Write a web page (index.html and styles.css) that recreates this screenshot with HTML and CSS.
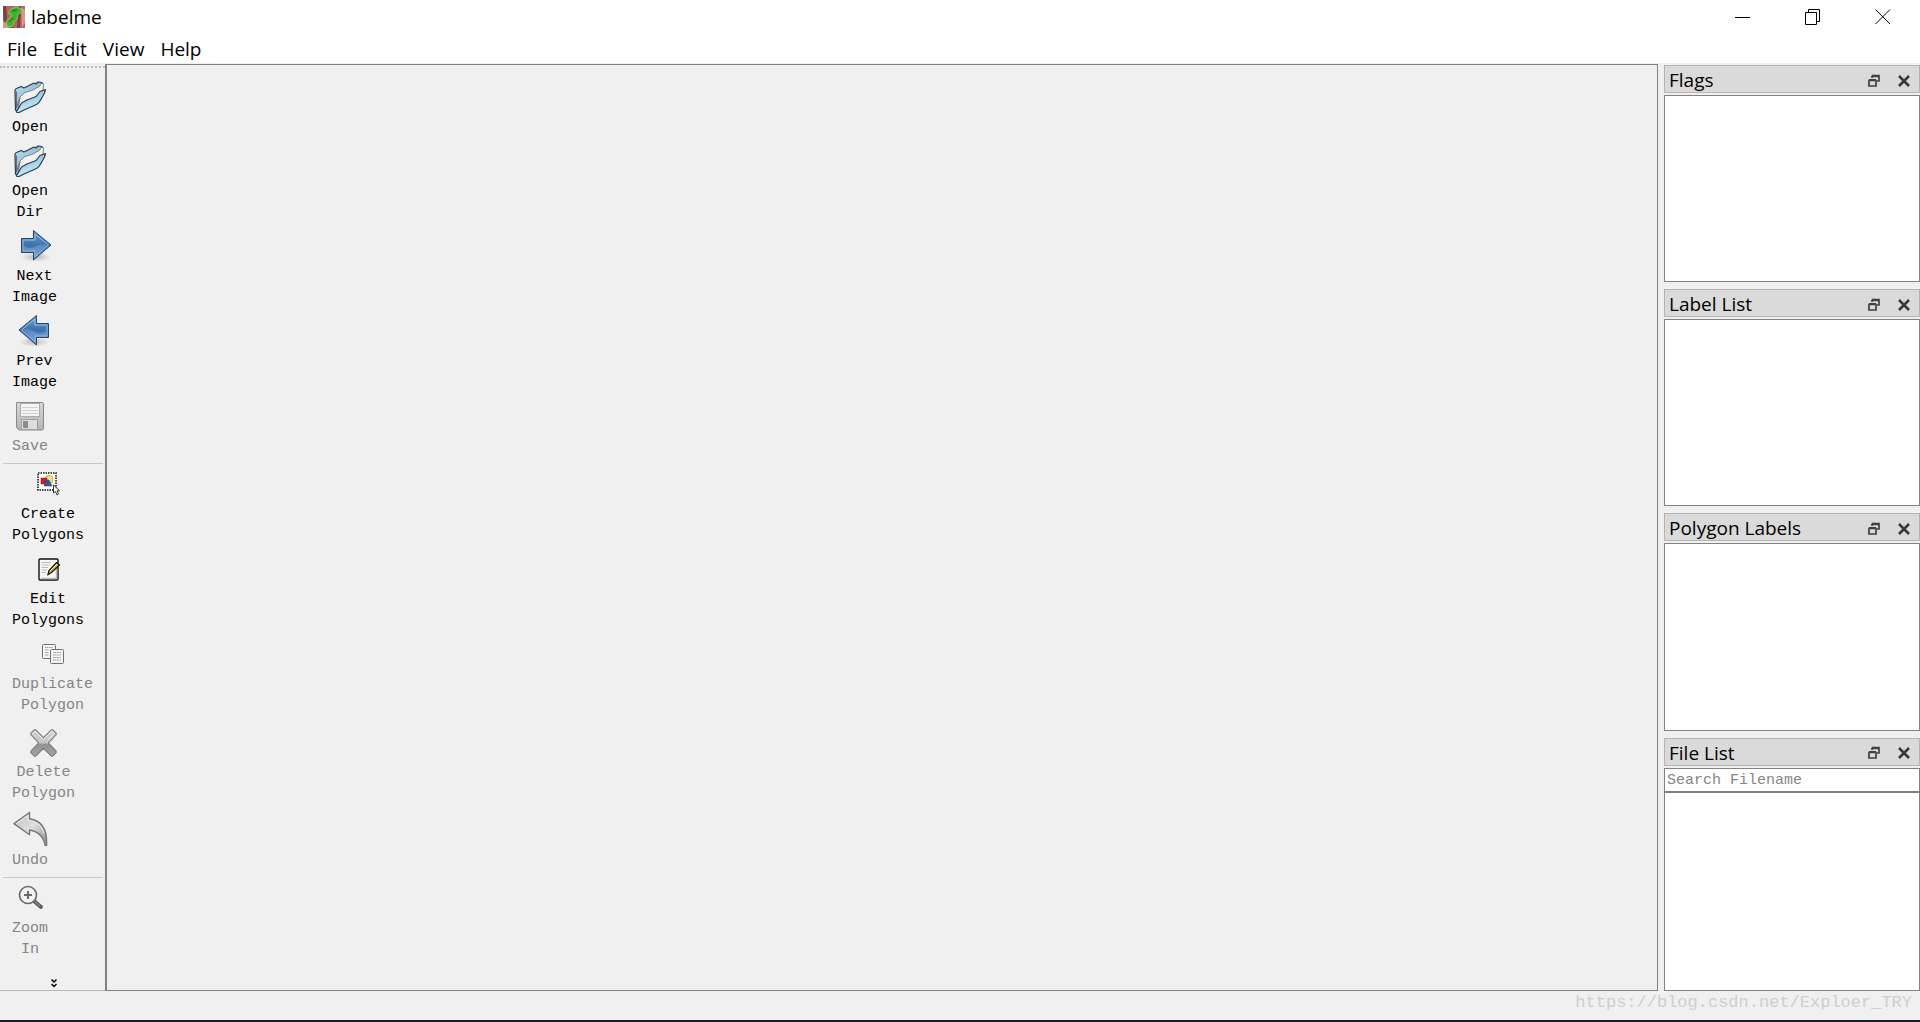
FILE: index.html
```
<!DOCTYPE html>
<html lang="en">
  <head>
    <meta charset="UTF-8" />
    <meta name="viewport" content="width=device-width, initial-scale=1.0" />
    <title>labelme</title>
    <link rel="stylesheet" href="styles.css">
  </head>
  <body>
    <svg class="defs" width="0" height="0" aria-hidden="true">
      <defs>
        <linearGradient id="folder-back" x1="0" y1="0" x2="1" y2="1">
          <stop offset="0" stop-color="#c3dff0" />
          <stop offset="1" stop-color="#6a9fbe" />
        </linearGradient>
        <linearGradient id="folder-front" x1="0" y1="0" x2="0.4" y2="1">
          <stop offset="0" stop-color="#7fb0cc" />
          <stop offset="0.6" stop-color="#a9d6ec" />
          <stop offset="1" stop-color="#d8f0fa" />
        </linearGradient>
        <linearGradient id="arrow-blue" x1="0" y1="0" x2="0" y2="1">
          <stop offset="0" stop-color="#6f9fd2" />
          <stop offset="0.5" stop-color="#3b71ad" />
          <stop offset="1" stop-color="#6f9dcf" />
        </linearGradient>
        <radialGradient id="shadow">
          <stop offset="0" stop-color="#777" stop-opacity="0.45" />
          <stop offset="1" stop-color="#777" stop-opacity="0" />
        </radialGradient>
        <linearGradient id="metal" x1="0" y1="0" x2="0" y2="1">
          <stop offset="0" stop-color="#d8d8d8" />
          <stop offset="1" stop-color="#b4b4b4" />
        </linearGradient>
        <linearGradient id="cross" x1="0" y1="0" x2="0" y2="1">
          <stop offset="0" stop-color="#d4d4d4" />
          <stop offset="0.5" stop-color="#c4c4c4" />
          <stop offset="0.55" stop-color="#929292" />
          <stop offset="1" stop-color="#a4a4a4" />
        </linearGradient>
        <linearGradient id="undo-fill" x1="0" y1="0" x2="1" y2="1">
          <stop offset="0" stop-color="#c0c0c0" />
          <stop offset="0.5" stop-color="#dedede" />
          <stop offset="1" stop-color="#8c8c8c" />
        </linearGradient>
        <symbol id="folder" viewBox="0 0 32 32">
          <path d="M1 9.500Q1 8 2.500 7.500L7 5.500L10 7L20 2L22 3L24 1L28 1.500L28.500 9L10 27L3 31L1.500 29Z" fill="url(#folder-back)" stroke="#2b3c48" stroke-width="1.200" stroke-linejoin="round" />
          <path d="M6 16L10 12L19 9L26 5L27 2.500L29.500 2.500L29 11L9 26L4 29Z" fill="#f4f1ef" stroke="#6d6d6d" stroke-width="0.800" />
          <path d="M3.500 29L7.500 22L13 19L22 15.500L26 10.500L31.500 8.500L30.500 12L26 20Q25 22 22.500 23.500L10 29L4 32Q2 31 2.500 29.500Z" fill="url(#folder-front)" stroke="#2b3c48" stroke-width="1.200" stroke-linejoin="round" />
          <path d="M2.500 10.500V27L6 17" fill="none" stroke="#5b7383" stroke-width="1.200" />
        </symbol>
        <symbol id="float" viewBox="0 0 12 13">
          <path d="M4 1.500H11V7H9M4 1.500V4M4 2.500H11" fill="none" stroke="#404040" stroke-width="1.700" />
          <path d="M1 6.500H8V12H1ZM1 5.800H8" fill="none" stroke="#404040" stroke-width="1.700" />
        </symbol>
        <symbol id="dock-close" viewBox="0 0 12 13">
          <path d="M1 2L11 12M11 2L1 12" fill="none" stroke="#383838" stroke-width="2.500" />
        </symbol>
      </defs>
    </svg>

    <div class="app">
      <header class="titlebar">
        <svg class="logo" viewBox="0 0 22 22" aria-hidden="true">
          <rect width="22" height="22" fill="#b86662" />
          <path d="M0 0H3L5 22H1ZM15 2L18 0L17 22H14ZM8 14L11 22H7Z" fill="#7d4142" />
          <path d="M18 1L22 4V16L19 22ZM0 15L4 18L6 22H0Z" fill="#d29a8e" />
          <path d="M5 7L8 3L13 1L18 3L19 6L15 8L14 13L11 16L9 21L4 20L3 15L7 12L9 9Z" fill="#43b02f" stroke="#7fdd55" stroke-width="0.800" />
          <path d="M9 5L14 4M6 16L10 12" stroke="#24861d" stroke-width="1.500" />
        </svg>
        <h1>labelme</h1>
        <div class="window-buttons">
          <button aria-label="Minimize">
            <svg viewBox="0 0 16 16"><path d="M0 8.500H15" /></svg>
          </button>
          <button aria-label="Restore">
            <svg viewBox="0 0 16 16"><path d="M.5 3.500H11.500V15.500H.5ZM3.500 3.500V.5H14.500V12.500H11.500" /></svg>
          </button>
          <button aria-label="Close">
            <svg viewBox="0 0 16 16"><path d="M.5 .5L15 15M15 .5L.5 15" /></svg>
          </button>
        </div>
      </header>

      <nav class="menubar">
        <button>File</button>
        <button>Edit</button>
        <button>View</button>
        <button>Help</button>
      </nav>

      <div class="workspace">
        <div class="toolbar" role="toolbar" aria-label="Tools">
          <div class="toolbar-handle"></div>
          <button class="tool">
            <svg class="icon"><use href="#folder" /></svg>
            Open
          </button>
          <button class="tool">
            <svg class="icon"><use href="#folder" /></svg>
            Open<br />Dir
          </button>
          <button class="tool">
            <svg class="icon" viewBox="0 0 32 32">
              <ellipse cx="17" cy="27" rx="15" ry="5" fill="url(#shadow)" />
              <path d="M2.500 8.500H14.500V.5L32 15L14.500 30V22.500H2.500Z" fill="url(#arrow-blue)" stroke="#24466d" />
              <path d="M4 10H16V4L29.500 15L16 26.500V21H4Z" fill="none" stroke="#9abce2" />
              <path d="M5 16Q10 20 16 17Q22 13 28 15L17 25V21H5Z" fill="#8bb4df" opacity="0.400" />
            </svg>
            Next<br />Image
          </button>
          <button class="tool">
            <svg class="icon" viewBox="0 0 32 32">
              <ellipse cx="15" cy="27" rx="15" ry="5" fill="url(#shadow)" />
              <path d="M29.500 8.500H17.500V.5L0 15L17.500 30V22.500H29.500Z" fill="url(#arrow-blue)" stroke="#24466d" />
              <path d="M28 10H16V4L2.500 15L16 26.500V21H28Z" fill="none" stroke="#9abce2" />
              <path d="M27 16Q22 20 16 17Q10 13 4 15L15 25V21H27Z" fill="#8bb4df" opacity="0.400" />
            </svg>
            Prev<br />Image
          </button>
          <button class="tool" disabled>
            <svg class="icon" viewBox="0 0 32 32">
              <path d="M2.500 2.500H28Q29.500 2.500 29.500 4V28.500Q29.500 30 28 30H5L2.500 27.500Z" fill="url(#metal)" stroke="#8a8a8a" />
              <rect x="6.500" y="3.500" width="19" height="13" fill="#f4f4f4" stroke="#ababab" />
              <path d="M8 7.500H24M8 10.500H24M8 13.500H24" stroke="#d2d2d2" />
              <rect x="7.500" y="19.500" width="16" height="10" fill="#dddddd" stroke="#a2a2a2" />
              <rect x="9" y="21" width="5" height="7" fill="#8c8c8c" />
            </svg>
            Save
          </button>
          <hr />
          <button class="tool">
            <svg class="icon" viewBox="0 0 32 32">
              <rect x="6" y="5" width="18" height="17" fill="#fff" stroke="#111" stroke-width="1.500" stroke-dasharray="1.500 1" />
              <circle cx="17" cy="11.500" r="4" fill="#f8e59a" stroke="#d6a51f" />
              <rect x="9" y="10" width="6" height="6" fill="#d41d24" stroke="#8f1116" stroke-width="0.500" />
              <path d="M14 12H17L20 18H12Z" fill="#31589a" stroke="#203f78" stroke-width="0.500" />
              <path d="M21.500 17V25L23.500 23.500L25 27L26.500 26L25 22.800H27.500Z" fill="#fff" stroke="#222" stroke-width="0.900" />
            </svg>
            Create<br />Polygons
          </button>
          <button class="tool">
            <svg class="icon" viewBox="0 0 32 32">
              <rect x="7" y="6" width="19" height="21" rx="1" fill="#f7f7f5" stroke="#111" stroke-width="1.400" />
              <path d="M9 25.500H24.500V14" fill="none" stroke="#bbb" stroke-width="1.500" />
              <path d="M9.500 9.500H19M9.500 12H18M9.500 14.500H16M9.500 17H15M9.500 19.500H14" stroke="#bbb" />
              <path d="M16 21.500L17 17.500L24.500 9.500L27.500 12L19.500 19.500Z" fill="#d5b43c" stroke="#111" stroke-width="1.200" />
              <path d="M18 18L25 11" stroke="#fbed9b" />
            </svg>
            Edit<br />Polygons
          </button>
          <button class="tool" disabled>
            <svg class="icon" viewBox="0 0 32 32">
              <g fill="#f3f3f3" stroke="#707070">
                <rect x="5.500" y="6.500" width="13" height="14" rx="1" />
                <rect x="13.500" y="11.500" width="13" height="14" rx="1" />
              </g>
              <path d="M8 9.500H16M8 12H12M8 14.500H12M8 17H12M16 14.500H24M16 17H24M16 19.500H24M16 22H24" stroke="#aaa" stroke-dasharray="3 0.500" />
            </svg>
            Duplicate<br />Polygon
          </button>
          <button class="tool" disabled>
            <svg class="icon icon-large" viewBox="0 0 36 36">
              <path d="M8.500 7L10 7L18 15L26 7L27.500 7L31 10.500V12L23 20.500L31 29V30.500L27.500 34H26L18 26L10 34H8.500L5 30.500V29L13 20.500L5 12V10.500Z" fill="url(#cross)" stroke="#7e7e7e" stroke-width="1.200" stroke-linejoin="round" />
              <path d="M7 11L9.500 8.500L18 17L26.500 8.500L29 11L22 18" fill="none" stroke="#ececec" />
            </svg>
            Delete<br />Polygon
          </button>
          <button class="tool" disabled>
            <svg class="icon icon-large" viewBox="0 0 36 36">
              <path d="M1 13L17 1.500V8Q36 11 34.500 35.500H33Q31 22 17 19.500V24.500Z" fill="url(#undo-fill)" stroke="#777" stroke-width="1.400" stroke-linejoin="round" />
              <path d="M3.500 13L15.500 4.500V9.500Q29 11 32 23" fill="none" stroke="#ededed" />
            </svg>
            Undo
          </button>
          <hr />
          <button class="tool" disabled>
            <svg class="icon" viewBox="0 0 32 32">
              <path d="M20 19L27 25" stroke="#5e5e5e" stroke-width="4" stroke-linecap="round" />
              <path d="M21 20L26 24" stroke="#a0a0a0" />
              <circle cx="14" cy="13" r="8.500" fill="#f2f2f2" stroke="#696969" stroke-width="1.600" />
              <path d="M14 9V17M10 13H18" stroke="#6a6a6a" stroke-width="2" />
            </svg>
            Zoom<br />In
          </button>
          <button class="toolbar-more" aria-label="More tools">
            <svg viewBox="0 0 6 9"><path d="M.5 .5L3 3L5.500 .5M.5 5L3 7.500L5.500 5" /></svg>
          </button>
        </div>

        <main class="canvas"></main>

        <aside class="docks">
          <section class="dock">
            <div class="dock-title">
              <h2>Flags</h2>
              <button aria-label="Float Flags"><svg><use href="#float" /></svg></button>
              <button aria-label="Close Flags"><svg><use href="#dock-close" /></svg></button>
            </div>
            <div class="dock-list"></div>
          </section>
          <section class="dock">
            <div class="dock-title">
              <h2>Label List</h2>
              <button aria-label="Float Label List"><svg><use href="#float" /></svg></button>
              <button aria-label="Close Label List"><svg><use href="#dock-close" /></svg></button>
            </div>
            <div class="dock-list"></div>
          </section>
          <section class="dock">
            <div class="dock-title">
              <h2>Polygon Labels</h2>
              <button aria-label="Float Polygon Labels"><svg><use href="#float" /></svg></button>
              <button aria-label="Close Polygon Labels"><svg><use href="#dock-close" /></svg></button>
            </div>
            <div class="dock-list"></div>
          </section>
          <section class="dock dock-files">
            <div class="dock-title">
              <h2>File List</h2>
              <button aria-label="Float File List"><svg><use href="#float" /></svg></button>
              <button aria-label="Close File List"><svg><use href="#dock-close" /></svg></button>
            </div>
            <input type="text" class="search" placeholder="Search Filename" aria-label="Search Filename" />
            <div class="dock-list"></div>
          </section>
        </aside>
      </div>

      <footer class="statusbar">https://blog.csdn.net/Exploer_TRY</footer>
    </div>
  </body>
</html>
```
FILE: styles.css
```
* {
  margin: 0;
  padding: 0;
  box-sizing: border-box;
}

body {
  font-family: "Open Sans", "Noto Sans", sans-serif;
  font-size: 19px;
  color: #000;
  background-color: #f0f0f0;
}

button {
  border: none;
  background-color: transparent;
  font: inherit;
  color: inherit;
}

.defs {
  position: absolute;
}

.app {
  display: flex;
  flex-direction: column;
  height: 100vh;
  overflow: hidden;
}

/* Title bar */

.titlebar {
  display: flex;
  align-items: center;
  height: 34px;
  padding: 0 2px 0 3px;
  background-color: #fff;
}

.logo {
  width: 22px;
  height: 22px;
  margin-right: 6px;
}

.titlebar > h1 {
  font-size: 19px;
  font-weight: 400;
}

.window-buttons {
  display: flex;
  height: 100%;
  margin-left: auto;
}

.window-buttons > button {
  width: 70px;
}

.window-buttons svg {
  display: block;
  width: 16px;
  height: 16px;
  margin: 0 auto;
  fill: none;
  stroke: #000;
}

.menubar {
  display: flex;
  gap: 16px;
  height: 29px;
  padding-left: 7px;
  background-color: #fff;
}

.workspace {
  display: flex;
  flex: 1;
  min-height: 0;
}

/* Toolbar */

.toolbar {
  display: flex;
  flex-direction: column;
  align-items: flex-start;
  width: 105px;
  border-bottom: 1px solid #b8b8b8;
}

.toolbar-handle {
  width: 100%;
  height: 5px;
  margin-bottom: 9px;
  border-bottom: 2px dotted #bdbdbd;
}

.tool {
  padding: 4px 12px 3px;
  font-family: "Liberation Mono", monospace;
  font-size: 15px;
  line-height: 21px;
}

.tool:disabled {
  color: #858585;
}

.icon {
  display: block;
  width: 32px;
  height: 32px;
  margin: 0 auto 4px;
}

.icon-large {
  width: 35px;
  height: 35px;
}

.toolbar > hr {
  width: 100px;
  margin: 3px 0 0 3px;
  border: none;
  border-top: 1px solid #c9c9c9;
}

.toolbar-more {
  width: 100%;
  margin-top: auto;
  padding: 0 0 2px 2px;
}

.toolbar-more > svg {
  display: block;
  width: 6px;
  height: 9px;
  margin: 0 auto;
  fill: none;
  stroke: #000;
  stroke-width: 1.5px;
}

.canvas {
  flex: 1;
  margin-top: 1px;
  border: 1px solid #828282;
  border-left-width: 2px;
}

/* Docks */

.docks {
  display: flex;
  flex-direction: column;
  gap: 7px;
  width: 262px;
  padding: 2px 0 0 6px;
}

.dock {
  display: flex;
  flex-direction: column;
  flex: 6 0 0;
}

.dock-files {
  flex-grow: 7;
}

.dock-title {
  display: flex;
  align-items: center;
  height: 28px;
  margin-bottom: 2px;
  padding: 2px 9px 0 4px;
  border: 1px solid #b4b4b4;
  background-color: #dadada;
}

.dock-title > h2 {
  flex: 1;
  font-size: 19px;
  font-weight: 400;
  line-height: 24px;
}

.dock-title > button {
  margin-left: 18px;
}

.dock-title svg {
  display: block;
  width: 12px;
  height: 13px;
}

.search {
  width: 100%;
  height: 24px;
  padding: 1px 2px 0;
  border: 1px solid #828282;
  background-color: #fff;
  font-family: "Liberation Mono", monospace;
  font-size: 15px;
}

.search::placeholder {
  color: #858585;
}

.dock-list {
  flex: 1;
  border: 1px solid #828282;
  background-color: #fff;
}

.statusbar {
  height: 31px;
  padding-right: 8px;
  border-bottom: 2px solid #141c28;
  font-family: "Liberation Mono", monospace;
  font-size: 17px;
  line-height: 24px;
  text-align: right;
  color: #cfcfcf;
}
```
